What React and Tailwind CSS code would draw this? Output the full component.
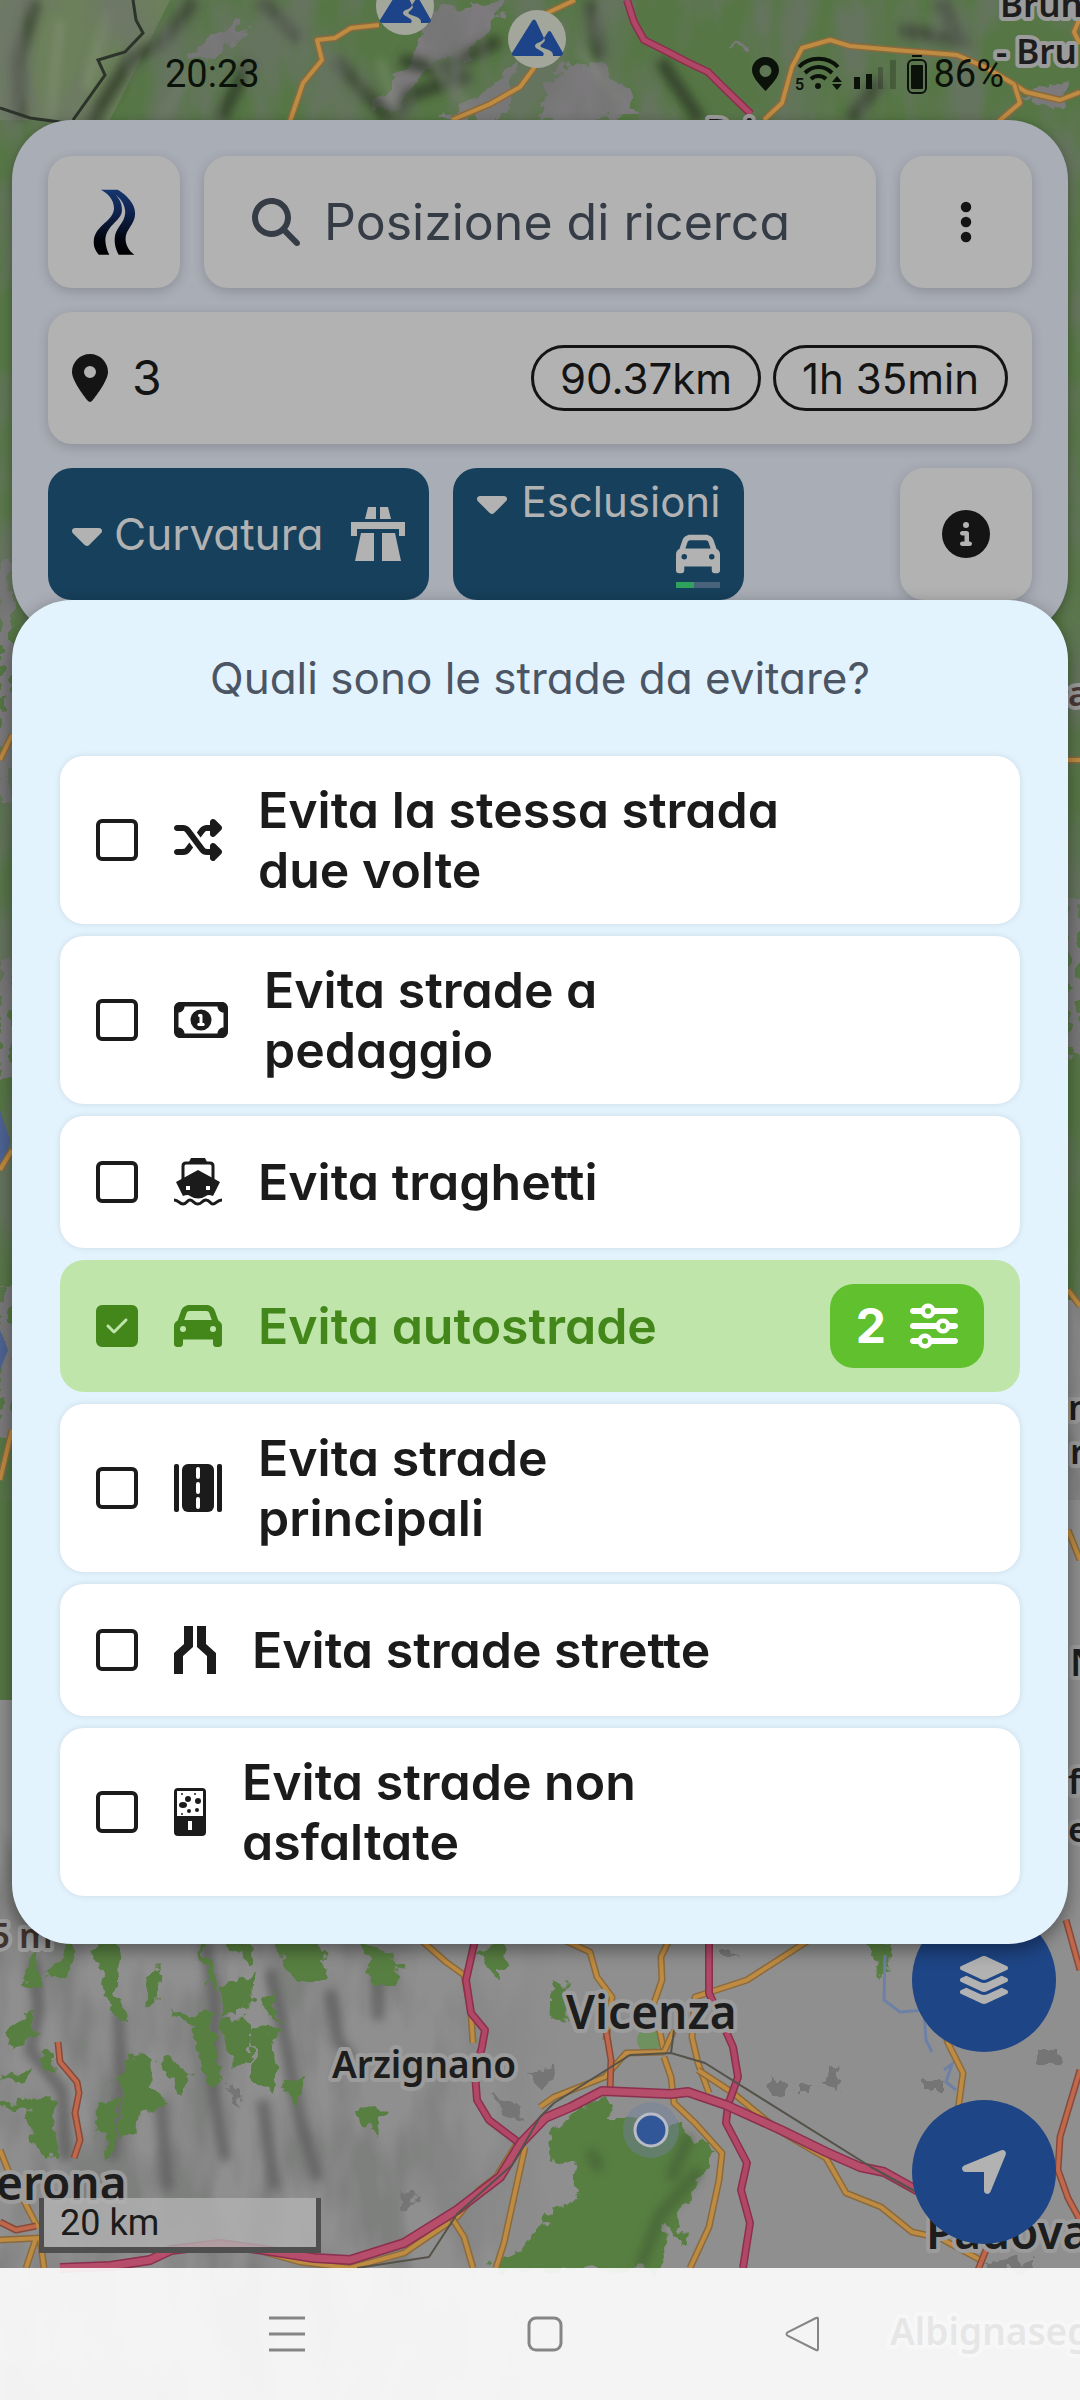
import { useState } from 'react'
import {
  FaCar,
  FaCaretDown,
  FaCheck,
  FaCircleInfo,
  FaEllipsisVertical,
  FaLayerGroup,
  FaLocationArrow,
  FaLocationDot,
  FaMagnifyingGlass,
  FaRegMoneyBill1,
  FaShuffle,
  FaSliders,
} from 'react-icons/fa6'

/* Icons */

function LogoIcon() {
  return (
    <svg viewBox="0 0 132 200" className="h-[66px] w-[44px]">
      <defs>
        <linearGradient id="road" x1="0" y1="0" x2="0" y2="1">
          <stop offset="0" stopColor="#16366e" />
          <stop offset="0.35" stopColor="#0f2350" />
          <stop offset="0.75" stopColor="#03060f" />
          <stop offset="1" stopColor="#000" />
        </linearGradient>
      </defs>
      <path
        fill="url(#road)"
        d="M26 2H78C104 18 130 44 130 74C130 108 100 122 101 152C102 172 112 188 128 199H80C72 184 67 168 68 150C70 116 98 106 100 72C100 50 90 34 76 22L70 16C84 32 91 46 90 66C88 98 38 112 40 158C41 174 46 188 52 199H20C8 186 3 172 5 154C9 110 66 96 66 58C66 32 48 14 26 2Z"
      />
    </svg>
  )
}

function MotorwayIcon({ className }) {
  return (
    <svg viewBox="0 0 54 54" fill="currentColor" className={className}>
      <path d="M17 0H25V12H14ZM29 0H37L40 12H29ZM0 15H54V29H48V22H6V29H0ZM10 26H23V54H4ZM31 26H44L50 54H31Z" />
    </svg>
  )
}

function FerryIcon({ className }) {
  return (
    <svg viewBox="0 0 48 48" className={className}>
      <path fill="currentColor" d="M17 0H31L33 4H15Z" />
      <path fill="none" stroke="currentColor" strokeWidth="3" d="M9 21V8Q9 5 12 5H36Q39 5 39 8V21" />
      <path
        fill="currentColor"
        fillRule="evenodd"
        d="M24 12L46 24L39 38Q34 36 32 38Q24 43 16 38Q14 36 9 38L2 24ZM12 28V32H16V28ZM32 28V32H36V28Z"
      />
      <path
        fill="none"
        stroke="currentColor"
        strokeWidth="3"
        d="M0 42C5 42 5 46 9 46S13 42 16 42S20 46 24 46S28 42 32 42S36 46 39 46S43 42 48 42"
      />
    </svg>
  )
}

function MainRoadIcon({ className }) {
  return (
    <svg viewBox="0 0 48 48" className={className}>
      <rect width="5" height="48" rx="2" fill="currentColor" />
      <rect x="43" width="5" height="48" rx="2" fill="currentColor" />
      <rect x="8" width="32" height="48" rx="6" fill="currentColor" />
      <path stroke="#fff" strokeWidth="4" strokeLinecap="round" d="M24 5V13M24 20V28M24 35V43" />
    </svg>
  )
}

function NarrowRoadIcon({ className }) {
  return (
    <svg viewBox="0 0 42 48" fill="currentColor" className={className}>
      <path d="M10 0H19V21L9 30V48H0V27L10 18ZM23 0H32V18L42 27V48H33V30L23 21Z" />
    </svg>
  )
}

function UnpavedIcon({ className }) {
  return (
    <svg viewBox="0 0 32 48" className={className}>
      <rect width="32" height="48" rx="4" fill="currentColor" />
      <path fill="#fff" d="M3 3H29V28H3ZM14 33H18V42H14Z" />
      <g fill="currentColor">
        <circle cx="8" cy="6" r="1" />
        <circle cx="21" cy="6" r="1" />
        <ellipse cx="14" cy="11" rx="3" ry="3" />
        <ellipse cx="24" cy="13" rx="3" ry="3" />
        <ellipse cx="9" cy="17" rx="4" ry="3" />
        <circle cx="23" cy="22" r="2" />
        <circle cx="15" cy="23" r="2" />
        <circle cx="8" cy="26" r="1" />
      </g>
    </svg>
  )
}

function StatusIcons() {
  return (
    <svg viewBox="0 0 180 44" className="h-11 w-[180px]" fill="#0b1209">
      <path
        fillRule="evenodd"
        d="M16.500 5C9 5 3 11 3 18C3 25 10 32 16.500 39C23 32 30 25 30 18C30 11 24 5 16.500 5ZM16.500 13A6 6 0 1 1 16.500 25A6 6 0 1 1 16.500 13Z"
      />
      <g fill="none" stroke="#0b1209" strokeWidth="4">
        <path d="M50 15C60 4 79 4 89 15" />
        <path d="M56 21C64 13 75 13 83 21" />
        <path d="M62 27C66 23 73 23 77 27" />
      </g>
      <circle cx="69" cy="34" r="3" />
      <text x="46" y="38" fontSize="16" fontWeight="600" fontFamily="Roboto, sans-serif">5</text>
      <path d="M88 24L93 30H83ZM88 38L93 32H83Z" />
      <path d="M105 25H111V37H105ZM117 22H123V37H117Z" />
      <path opacity="0.25" d="M129 15H134V37H129ZM141 8H147V37H141Z" />
      <path d="M163 3H173V5H163Z" />
      <rect x="159" y="8" width="18" height="33" rx="5" fill="none" stroke="#0b1209" strokeWidth="2" />
      <rect x="162" y="13" width="12" height="24" rx="1" />
    </svg>
  )
}

/* Map */

const ORANGE_ROADS = [
  'M575 0L545 14L534 68L520 87L490 104L452 120',
  'M379 25L351 28L335 38L317 40L322 60L303 83L289 124',
  'M764 120L782 103L792 67L802 48L830 40L850 46L895 50L957 55L985 67L1012 83L1026 92L1060 100L1080 92',
  'M1014 84L1020 103L998 122',
  'M1080 18L1074 32L1080 44',
  'M421 1940L446 1962L464 1975L471 2013L473 2043',
  'M518 2142L496 2177L479 2190L457 2217L404 2253L350 2268L300 2262L264 2252',
  'M525 2147L514 2197L504 2243L496 2268',
  'M452 2218L464 2237L473 2268',
  'M564 1940L590 1952L597 1977L612 1997L606 2040',
  'M669 1940L661 1957L662 1980L654 2003L664 2052',
  'M809 1940L747 1980L695 1997L692 2037L698 2063L709 2093',
  'M540 2107L554 2097L605 2077L626 2053L664 2052L674 2030',
  'M664 2057L671 2077L674 2103L695 2123L722 2153L719 2180L709 2227L690 2268',
  'M698 2070L733 2093L778 2130L826 2158L846 2193L881 2207L912 2232L940 2238L984 2262',
  'M935 2000L948 2043L963 2073L958 2110',
  'M0 2150L8 2170L38 2228M0 2240L40 2238M36 2238L26 2268M40 2238L44 2268',
  'M0 760L12 735M0 1170L12 1150M0 1480L12 1430M1068 760H1080M1068 1290L1080 1306M1068 1530L1080 1560',
]

const RED_ROADS = [
  'M58 2042L60 2062L77 2082L79 2093L75 2113L80 2140L74 2158',
  'M1080 2070L1060 2137L1058 2170L1068 2198L1080 2220',
  'M606 2030L611 2060L610 2092',
  'M0 2222L16 2230L36 2226',
  'M986 2250L978 2270',
  'M1066 1920L1080 1970',
]

const PINK_ROADS = [
  'M627 0L634 22L644 40L664 50L689 63L708 72L723 87L751 114',
  'M475 1940L466 1980L471 2013L485 2030L482 2047L475 2073L477 2100L489 2120L518 2142',
  'M709 1940L709 1993L733 2047L738 2077L728 2105L726 2123L747 2163L741 2190L750 2223L743 2268',
]

const HIGHWAY =
  'M60 2268L110 2266L150 2260L171 2250L220 2244L264 2250L314 2258L350 2260L404 2243L457 2210L500 2177L521 2143L545 2118L571 2107L602 2091L671 2094L688 2092L726 2105L781 2130L826 2152L860 2167L884 2172L920 2192'

const RAILWAY =
  'M357 2268L429 2257L457 2214L512 2165L540 2117L554 2103L630 2055L671 2053L705 2063L871 2167L920 2194M671 2053L674 2030'

const WOODS = [
  'M605 2098L574 2117L550 2133L552 2157L578 2163L580 2197L554 2210L530 2243L496 2268H657L667 2223L685 2243L674 2213L698 2180L713 2153L678 2123L650 2146L635 2118L610 2125Z',
  'M95 1940L120 1936L116 1990L124 2020L110 2010ZM22 1980L34 1950L38 1985ZM50 1975L70 1940L72 1972Z',
  'M146 1980L158 1970L156 2000L146 2002ZM4 2040L30 2010L36 2035L10 2048ZM5 2080L28 2068L26 2082Z',
  'M222 1985L252 1978L250 2010L224 2014ZM225 2020L250 2022L248 2060L232 2065Z',
  'M262 1998L278 1990L277 2018ZM252 2035L278 2028L270 2092L258 2085Z',
  'M178 2015L212 2012L218 2085L208 2080L195 2035Z',
  'M132 2055L150 2060L150 2090L168 2108L135 2110L134 2135L122 2135L120 2080Z',
  'M96 2105L116 2100L116 2135L108 2155Z',
  'M2 2105L50 2098L58 2155L40 2150L28 2110Z',
  'M275 1940L320 1940L325 1975L305 1983L285 1965ZM200 1940L216 1985L208 1980ZM228 1945H256L250 1965Z',
  'M362 1940L400 1965L395 1985L374 1985ZM480 1955L502 1940L504 1960L498 1978Z',
  'M362 2112L382 2112L376 2138ZM282 2085L302 2082L294 2104ZM160 2060L172 2060L190 2080L184 2090Z',
  'M553 1985L566 1985L566 2015L552 2018ZM38 2055L52 2052L50 2070ZM870 1940H886L888 1975L882 1976Z',
]

function MapLabel({ x, y, size, children, color = '#1d1d1d', halo = '#9c9c9c' }) {
  return (
    <text
      x={x}
      y={y}
      fontSize={size}
      fontWeight="600"
      fill={color}
      stroke={halo}
      strokeWidth="8"
      strokeLinejoin="round"
      paintOrder="stroke"
    >
      {children}
    </text>
  )
}

function MountainMarker({ x, y }) {
  return (
    <g transform={`translate(${x} ${y})`}>
      <circle r="29" fill="#a3a69b" />
      <path fill="#1d4488" d="M-5 -18Q-3 -21 -1 -18L7 -1L11 -7Q12 -9 14 -7L26 14Q26 17 23 17H-22Q-26 17 -25 14Z" />
      <path fill="#a3a69b" d="M7 -1L8 1C7 5 2 5 4 8C8 10 17 11 16 17H6C10 12 -2 11 -2 7C-2 3 6 4 7 -1Z" />
    </g>
  )
}

function Road({ d, color, edge, width }) {
  return (
    <>
      <path d={d} stroke={edge} strokeWidth={width + 3} />
      <path d={d} stroke={color} strokeWidth={width} />
    </>
  )
}

function MapView() {
  return (
    <svg
      viewBox="0 0 1080 2400"
      preserveAspectRatio="xMidYMid slice"
      className="absolute inset-0 h-full w-full"
      fontFamily="'Noto Sans', 'Open Sans', sans-serif"
    >
      <defs>
        <filter id="rough" x="-5%" y="-5%" width="110%" height="110%">
          <feTurbulence type="fractalNoise" baseFrequency="0.06" numOctaves="3" seed="4" result="n" />
          <feDisplacementMap in="SourceGraphic" in2="n" scale="22" xChannelSelector="R" yChannelSelector="G" />
        </filter>
        <filter id="relief" x="0" y="0" width="100%" height="100%">
          <feTurbulence type="fractalNoise" baseFrequency="0.022 0.008" numOctaves="3" seed="11" />
          <feColorMatrix values="0 0 0 0 0.16  0 0 0 0 0.17  0 0 0 0 0.16  3.6 0 0 0 -1.4" />
        </filter>
        <filter id="soft" x="-10%" y="-50%" width="120%" height="200%">
          <feGaussianBlur stdDeviation="5" />
        </filter>
        <linearGradient id="fade" x1="0" x2="1" y1="0" y2="0">
          <stop offset="0.7" stopColor="#fff" />
          <stop offset="1" stopColor="#000" />
        </linearGradient>
        <mask id="hills">
          <rect width="560" height="600" y="1800" fill="url(#fade)" />
        </mask>
      </defs>

      <rect width="1080" height="2400" fill="#8f8f8f" />

      {/* Alps */}
      <rect width="1080" height="1300" fill="#567745" />
      <rect width="14" height="1700" fill="#567745" />
      <path fill="#6c805b" d="M0 0H170L110 120H0Z" />
      <g filter="url(#rough)" fill="#7b7a7c">
        <path d="M232 22L250 28L215 62L190 55ZM410 60L430 10L510 0L490 30L465 60L440 55L390 115L370 110Z" />
        <path d="M550 70L600 60L640 110L610 120H540ZM480 95L520 60L500 120H440ZM730 42L750 45L745 55ZM1020 95L1070 80L1060 112Z" />
        <path d="M0 560H12V800H0ZM0 960H12V1080H0ZM0 1290H12V1440H0ZM1068 900H1080V1060H1068Z" />
      </g>
      <g filter="url(#soft)" fill="none" stroke="#333d2c" strokeWidth="14" opacity="0.8">
        <path d="M195 0L165 40L130 60L90 124M35 0L18 60L20 120M250 60L220 120" />
        <path d="M500 40L440 70L400 60M470 75L410 95L395 120M660 60L700 120M880 80L850 120" />
        <path d="M335 60L390 120M590 0L600 60M940 0L960 40L900 30M260 0L300 40" />
      </g>
      <g filter="url(#soft)" fill="none" stroke="#99a08f" strokeWidth="6" opacity="0.45">
        <path d="M60 20L50 120M110 10L85 90M190 70L160 120M380 60L400 120M430 60L470 110M580 50L620 100" />
      </g>
      <rect width="1080" height="1500" filter="url(#relief)" opacity="0.6" />
      <path fill="none" stroke="#2c332b" strokeWidth="3" d="M133 0L136 20L143 33L125 52L98 60L105 75L73 120M0 108L30 118L60 122" />

      {/* Hills and plain */}
      <path fill="#4d6393" d="M0 1110L10 1140L4 1170H0ZM0 1330L8 1350L0 1370Z" />
      <g mask="url(#hills)">
        <rect y="1800" width="560" height="600" filter="url(#relief)" opacity="0.5" />
      </g>
      <g filter="url(#soft)" fill="none" stroke="#5c5c5c" strokeWidth="11" opacity="0.8">
        <path d="M34 1960L38 2010L30 2050L62 2090L66 2160M118 2010L122 2080L112 2160M205 1945L215 2000L212 2080L225 2160" />
        <path d="M270 1970L285 2040L300 2120L318 2180M330 1990L338 2040L352 2060M378 1970V2020M160 2100L168 2190M262 2100L275 2190" />
      </g>
      <g fill="#597f42" filter="url(#rough)">
        {WOODS.map((d) => (
          <path key={d} d={d} stroke="#597f42" strokeWidth="3" />
        ))}
      </g>
      <g filter="url(#soft)" fill="none" stroke="#3b5530" strokeWidth="12" opacity="0.5">
        <path d="M700 2170L660 2215L640 2268M590 2150L600 2170M690 2135L670 2180" />
      </g>
      <g fill="#747474" filter="url(#rough)">
        <path d="M820 2085L835 2065L845 2085L838 2095ZM770 2080H784V2094H770ZM800 2083H814V2096H800ZM1040 2050H1056V2062H1040ZM925 2080H942V2092H925Z" />
        <path d="M490 2095L520 2110L524 2124L500 2110ZM530 2075L560 2065L540 2090ZM400 2195L420 2200L410 2212ZM985 2262L1030 2260L1034 2270H985ZM722 1950L740 1960H722ZM220 2090L232 2085L242 2108Z" />
      </g>
      <circle cx="649" cy="2040" r="12" fill="#6f9160" />
      <path fill="none" stroke="#6d80a6" strokeWidth="3" d="M885 1955L884 2000L900 2012L924 2010L926 2040L932 2052M944 2070L952 2064L946 2082L956 2090" />

      {/* Roads */}
      <g fill="none" strokeLinejoin="round">
        {ORANGE_ROADS.map((d) => (
          <Road key={d} d={d} color="#bd8b42" edge="#8b6a3d" width={4} />
        ))}
        {RED_ROADS.map((d) => (
          <Road key={d} d={d} color="#c0684c" edge="#874a3a" width={4} />
        ))}
        {PINK_ROADS.map((d) => (
          <Road key={d} d={d} color="#b04766" edge="#8b2f4e" width={5} />
        ))}
        <Road d={HIGHWAY} color="#b64d6b" edge="#8b2f4e" width={7} />
        <path d={RAILWAY} stroke="#555249" strokeWidth="2" />
      </g>

      <circle cx="651" cy="2130" r="28" fill="#7280a0" opacity="0.45" />
      <circle cx="651" cy="2130" r="16" fill="#325799" stroke="#b9bcc4" strokeWidth="3" />

      <MountainMarker x={405} y={6} />
      <MountainMarker x={537} y={39} />

      <MapLabel x={1000} y={17} size={35}>Brun</MapLabel>
      <MapLabel x={996} y={64} size={35}>- Bru</MapLabel>
      <MapLabel x={706} y={144} size={35}>Bri</MapLabel>
      <MapLabel x={1068} y={706} size={35} color="#4a3a38">a</MapLabel>
      <MapLabel x={1068} y={1420} size={35}>n</MapLabel>
      <MapLabel x={1070} y={1464} size={35}>r</MapLabel>
      <MapLabel x={1070} y={1676} size={38}>N</MapLabel>
      <MapLabel x={1068} y={1794} size={35}>f</MapLabel>
      <MapLabel x={1068} y={1842} size={35}>e</MapLabel>
      <MapLabel x={-10} y={1948} size={35} color="#43332f">5 m</MapLabel>
      <MapLabel x={566} y={2029} size={46}>Vicenza</MapLabel>
      <MapLabel x={332} y={2078} size={37}>Arzignano</MapLabel>
      <MapLabel x={-4} y={2200} size={46}>erona</MapLabel>
      <MapLabel x={926} y={2249} size={46}>Padova</MapLabel>
      <MapLabel x={890} y={2345} size={37} color="#000" halo="#aaa">Albignaseg</MapLabel>
    </svg>
  )
}

/* Exclusions */

const EXCLUSIONS = [
  { id: 'same-road', label: 'Evita la stessa strada due volte', Icon: FaShuffle, size: 'h-12 w-12' },
  { id: 'tolls', label: 'Evita strade a pedaggio', Icon: FaRegMoneyBill1, size: 'h-12 w-[54px]' },
  { id: 'ferries', label: 'Evita traghetti', Icon: FerryIcon, size: 'h-12 w-12' },
  { id: 'highways', label: 'Evita autostrade', Icon: FaCar, size: 'h-12 w-12', settings: 2 },
  { id: 'main-roads', label: 'Evita strade principali', Icon: MainRoadIcon, size: 'h-12 w-12' },
  { id: 'narrow', label: 'Evita strade strette', Icon: NarrowRoadIcon, size: 'h-12 w-[42px]' },
  { id: 'unpaved', label: 'Evita strade non asfaltate', Icon: UnpavedIcon, size: 'h-12 w-8' },
]

function ExclusionRow({ item, checked, onToggle }) {
  const { id, label, Icon, size, settings } = item
  return (
    <li
      className={
        checked
          ? 'flex min-h-[132px] items-center rounded-3xl bg-[#bfe5aa] px-9 py-6 text-[#43871a]'
          : 'flex min-h-[132px] items-center rounded-3xl bg-white px-9 py-6 text-[#1b1b1b] shadow-[0_0_6px_rgba(0,0,0,0.1)]'
      }
    >
      <label htmlFor={id} className="flex flex-1 items-center gap-9">
        <span className="grid shrink-0 place-items-center">
          <input
            id={id}
            type="checkbox"
            checked={checked}
            onChange={onToggle}
            className="col-start-1 row-start-1 h-[42px] w-[42px] appearance-none rounded-md border-4 border-current checked:bg-current"
          />
          {checked && <FaCheck className="pointer-events-none col-start-1 row-start-1 h-6 w-6 text-[#bfe5aa]" />}
        </span>
        <Icon className={`shrink-0 ${size}`} />
        <span className="max-w-[524px] text-[50px] leading-[60px] font-semibold">{label}</span>
      </label>
      {checked && settings && (
        <button className="flex h-[84px] items-center gap-6 rounded-3xl bg-[#60c02d] px-[26px] text-[48px] font-bold text-white">
          {settings}
          <FaSliders className="h-12 w-12" />
        </button>
      )}
    </li>
  )
}

function ExclusionSheet() {
  const [selected, setSelected] = useState(['highways'])

  const toggle = (id) =>
    setSelected((prev) => (prev.includes(id) ? prev.filter((x) => x !== id) : [...prev, id]))

  return (
    <section className="relative z-20 -mt-9 rounded-[60px] bg-[#e2f3fe] p-12 shadow-[0_6px_18px_rgba(0,0,0,0.4)]">
      <h2 className="mb-12 text-center text-[44px] leading-[60px] text-[#4b5563]">Quali sono le strade da evitare?</h2>
      <ul className="flex flex-col gap-3">
        {EXCLUSIONS.map((item) => (
          <ExclusionRow
            key={item.id}
            item={item}
            checked={selected.includes(item.id)}
            onToggle={() => toggle(item.id)}
          />
        ))}
      </ul>
    </section>
  )
}

/* Header */

function StatusBar() {
  return (
    <div className="relative flex h-[120px] items-center justify-between pt-7 pr-[76px] pl-[165px] font-[Roboto,sans-serif] text-[38px] text-[#0b1209]">
      <span>20:23</span>
      <div className="flex items-center gap-1">
        <StatusIcons />
        <span>86%</span>
      </div>
    </div>
  )
}

function Header() {
  const card = 'rounded-3xl bg-[#b2b2b2] shadow-[0_3px_12px_rgba(0,0,0,0.18)]'
  return (
    <header className="relative flex flex-col gap-6 rounded-[60px] bg-[#a9adb6] p-9 shadow-[0_3px_12px_rgba(0,0,0,0.3)]">
      <div className="flex gap-6">
        <button aria-label="Home" className={`grid h-[132px] w-[132px] place-items-center ${card}`}>
          <LogoIcon />
        </button>
        <label className={`flex h-[132px] flex-1 items-center gap-6 px-12 text-[#353c46] ${card}`}>
          <FaMagnifyingGlass className="h-12 w-12 shrink-0" />
          <input
            type="text"
            aria-label="Posizione di ricerca"
            placeholder="Posizione di ricerca"
            className="w-full min-w-0 bg-transparent text-[50px] outline-none placeholder:text-[#353c46]"
          />
        </label>
        <button aria-label="Menu" className={`grid h-[132px] w-[132px] place-items-center text-[#141414] ${card}`}>
          <FaEllipsisVertical className="h-12 w-12" />
        </button>
      </div>

      <div className={`flex h-[132px] items-center px-6 text-[42px] text-[#141414] ${card}`}>
        <FaLocationDot className="h-12 w-9" />
        <span className="ml-6 text-[48px]">3</span>
        <div className="ml-auto flex gap-3">
          <span className="flex h-[66px] items-center rounded-full border-[3px] border-[#141414] px-[26px]">90.37km</span>
          <span className="flex h-[66px] items-center rounded-full border-[3px] border-[#141414] px-[26px]">1h 35min</span>
        </div>
      </div>

      <div className="flex gap-6 text-[#b2b2b2]">
        <button className="flex h-[132px] items-center gap-3 rounded-3xl bg-[#17405c] px-6 text-[44px]">
          <FaCaretDown className="h-12 w-[30px]" />
          Curvatura
          <MotorwayIcon className="ml-4 h-[54px] w-[54px]" />
        </button>
        <button className="flex h-[132px] flex-col items-end rounded-3xl bg-[#17405c] px-6 pt-1 text-[42px]">
          <span className="flex items-center gap-3.5 leading-[60px]">
            <FaCaretDown className="h-12 w-[30px]" />
            Esclusioni
          </span>
          <span className="flex flex-col gap-1.5">
            <FaCar className="h-11 w-11" />
            <span className="flex h-1.5 w-11 bg-[#48647b]">
              <span className="w-2/5 bg-[#2fa35c]" />
            </span>
          </span>
        </button>
        <button aria-label="Info" className={`ml-auto grid h-[132px] w-[132px] place-items-center text-[#141414] ${card}`}>
          <FaCircleInfo className="h-12 w-12" />
        </button>
      </div>
    </header>
  )
}

/* Bottom controls */

function MapControls() {
  return (
    <>
      <div className="absolute right-6 bottom-[156px] flex flex-col gap-12">
        <button aria-label="Livelli" className="grid h-36 w-36 place-items-center rounded-full bg-[#1e4585] text-[#b2b2b2]">
          <FaLayerGroup className="h-[54px] w-[54px]" />
        </button>
        <button aria-label="La mia posizione" className="grid h-36 w-36 place-items-center rounded-full bg-[#1e4585] text-[#b2b2b2]">
          <FaLocationArrow className="h-[54px] w-[54px]" />
        </button>
      </div>
      <div className="absolute bottom-[147px] left-[39px] flex h-[55px] w-[282px] items-center border-x-[5px] border-b-[6px] border-[#4f4f4f] bg-[#b2b2b2]/80 px-4 font-[Roboto,sans-serif] text-4xl text-[#1b1b1b]">
        20 km
      </div>
    </>
  )
}

function NavBar() {
  return (
    <nav className="relative mt-auto flex h-[132px] items-center justify-center gap-[222px] bg-white/90 pl-2.5 text-[#858585]">
      <button aria-label="Recenti">
        <svg viewBox="0 0 36 36" className="h-9 w-9" stroke="currentColor" strokeWidth="3">
          <path d="M0 2H36M0 18H36M0 34H36" />
        </svg>
      </button>
      <button aria-label="Schermata Home">
        <svg viewBox="0 0 36 36" className="h-9 w-9" fill="none" stroke="currentColor" strokeWidth="3">
          <rect x="2" y="2" width="32" height="32" rx="7" />
        </svg>
      </button>
      <button aria-label="Indietro">
        <svg viewBox="0 0 36 36" className="h-9 w-9" fill="none" stroke="currentColor" strokeWidth="2">
          <path d="M33 3V33Q33 35 31 34L3 20Q0 18 3 16L31 2Q33 1 33 3Z" />
        </svg>
      </button>
    </nav>
  )
}

function App() {
  return (
    <div className="relative flex min-h-screen flex-col overflow-hidden font-[Inter,sans-serif] [font-feature-settings:'cv11']">
      <MapView />
      <StatusBar />
      <MapControls />
      <main className="relative px-3">
        <Header />
        <ExclusionSheet />
      </main>
      <NavBar />
    </div>
  )
}

export default App
